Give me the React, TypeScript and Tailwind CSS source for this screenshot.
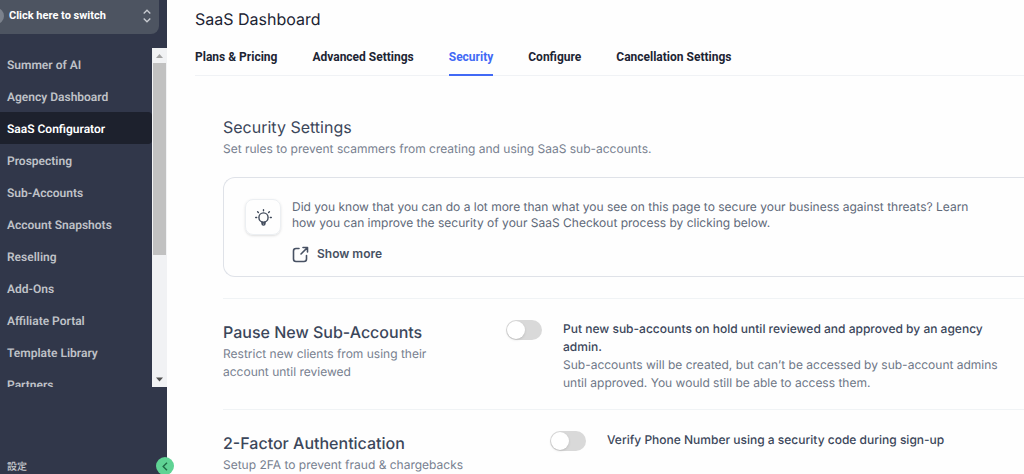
import { useState } from "react";
import { clsx } from "clsx";

const NAV_ITEMS = [
  "Summer of AI",
  "Agency Dashboard",
  "SaaS Configurator",
  "Prospecting",
  "Sub-Accounts",
  "Account Snapshots",
  "Reselling",
  "Add-Ons",
  "Affiliate Portal",
  "Template Library",
  "Partners",
];

const TABS = ["Plans & Pricing", "Advanced Settings", "Security", "Configure", "Cancellation Settings"];

function Sidebar() {
  const [active, setActive] = useState("SaaS Configurator");

  return (
    <aside className="relative flex w-[167px] shrink-0 flex-col bg-[#31374a] font-[Roboto,sans-serif]">
      <button className="mr-2 flex h-[34px] shrink-0 items-center rounded-br-lg bg-[#4d5461] pr-2 pb-0.5 text-left text-[11px] font-bold text-white">
        <span className="-ml-3 mr-[5px] h-4 w-4 shrink-0 rounded-full bg-[#7b818c]" />
        <span className="flex-1 whitespace-nowrap">Click here to switch</span>
        <svg width="8" height="14" viewBox="0 0 8 14" fill="none" stroke="#c9ccd2" strokeWidth="1.3">
          <path d="M0.7 4.5 4 1.2l3.3 3.3M0.7 9.5 4 12.8l3.3-3.3" />
        </svg>
      </button>

      <div className="mt-3.5 flex min-h-0 flex-1">
        <nav className="min-w-0 flex-1 overflow-hidden">
          {NAV_ITEMS.map((item) => (
            <a
              key={item}
              href="#"
              onClick={() => setActive(item)}
              className={clsx(
                "flex h-8 items-center whitespace-nowrap rounded-r pt-0.5 pl-[7px] text-xs font-semibold",
                item === active ? "bg-[#1d212d] text-white" : "text-[#bfc1c7]"
              )}
            >
              {item}
            </a>
          ))}
        </nav>
        <div className="flex w-[15px] flex-col items-center bg-[#f1f2f4]">
          <svg className="shrink-0" width="15" height="15" viewBox="0 0 15 15">
            <path d="M4 10 7.5 6l3.5 4z" fill="#a3a3a3" />
          </svg>
          <div className="h-48 w-[13px] shrink-0 bg-[#c1c1c1]" />
          <svg className="mt-auto shrink-0" width="15" height="15" viewBox="0 0 15 15">
            <path d="M4 5.500 7.500 9.500 11 5.500z" fill="#505050" />
          </svg>
        </div>
      </div>

      <div className="flex h-[87px] shrink-0 items-end pb-0.5">
        <a href="#" className="pl-[7px] font-['Noto_Sans_CJK_JP',sans-serif] text-[10px] leading-3 font-medium text-[#c6c8cd]">
          設定
        </a>
      </div>
      <button
        aria-label="Collapse sidebar"
        className="absolute -right-[7px] -bottom-px z-10 flex h-[18px] w-[18px] items-center justify-center rounded-full bg-[#5fd394]"
      >
        <svg width="6" height="9" viewBox="0 0 6 9" fill="none" stroke="#1f6b45" strokeWidth="1.4">
          <path d="M5 0.800 1.200 4.500 5 8.200" />
        </svg>
      </button>
    </aside>
  );
}

function BulbIcon() {
  return (
    <svg width="17" height="17" viewBox="0 0 17 17" fill="none" stroke="#3f495a" strokeWidth="1.400" strokeLinecap="round">
      <circle cx="8.500" cy="8.500" r="4.600" />
      <path d="M7 13v1.600a1.500 1.500 0 0 0 3 0V13M7 14h3" />
      <path d="M8.500 0.700v1M2.600 2.800l.8.800M14.400 2.800l-.8.800M0.700 8.500h1M15.300 8.500h1" />
    </svg>
  );
}

function ShareIcon() {
  return (
    <svg width="17" height="17" viewBox="0 0 17 17" fill="none" stroke="#475163" strokeWidth="1.600" strokeLinecap="round" strokeLinejoin="round">
      <path d="M11 1.500h4.500V6M15.500 1.500 9 8" />
      <path d="M7 2.500H4Q1.500 2.500 1.500 5v8q0 2.500 2.500 2.500h8q2.500 0 2.500-2.500V9.500" />
    </svg>
  );
}

function Toggle({ id }: { id: string }) {
  const [on, setOn] = useState(false);

  return (
    <input
      id={id}
      type="checkbox"
      role="switch"
      checked={on}
      onChange={(e) => setOn(e.target.checked)}
      className="h-5 w-9 shrink-0 cursor-pointer appearance-none rounded-full bg-[#d9d9d9] p-px before:block before:h-[18px] before:w-[18px] before:rounded-full before:bg-white before:shadow checked:bg-[#4169f5] checked:before:translate-x-4"
    />
  );
}

export default function App() {
  const [tab, setTab] = useState("Security");

  return (
    <div className="flex h-screen overflow-hidden bg-[#fefefe] font-[Inter,sans-serif] [text-rendering:geometricPrecision]">
      <Sidebar />

      <main className="min-w-0 flex-1 overflow-hidden pl-7">
        <h1 className="pt-2 text-base leading-[22px] font-normal text-[#1c2433]">SaaS Dashboard</h1>

        <div className="mt-2 flex gap-[35px] border-b border-[#f0f2f5] font-[Roboto,sans-serif]">
          {TABS.map((name) => (
            <button
              key={name}
              onClick={() => setTab(name)}
              className={clsx(
                "-mb-px h-[38px] whitespace-nowrap border-b-2 pt-0.5 text-xs font-bold",
                name === tab ? "border-[#4169f5] text-[#4169f5]" : "border-transparent text-[#1c2433]"
              )}
            >
              {name}
            </button>
          ))}
        </div>

        <div className="pl-7 text-xs text-[#5f6979]">
          <h2 className="mb-px pt-[39px] text-base leading-6 text-[#3b465a]">Security Settings</h2>
          <p className="leading-[18px] text-[#77808f]">
            Set rules to prevent scammers from creating and using SaaS sub-accounts.
          </p>

          <section className="mt-[19px] flex gap-[11px] rounded-l-xl border border-r-0 border-[#dfe2e8] pt-[21px] pr-9 pb-[13px] pl-[21px]">
            <div className="flex h-9 w-9 shrink-0 items-center justify-center rounded-lg border border-[#eceff2] shadow-sm">
              <BulbIcon />
            </div>
            <div>
              <p className="leading-4">
                Did you know that you can do a lot more than what you see on this page to secure your business against
                threats? Learn how you can improve the security of your SaaS Checkout process by clicking below.
              </p>
              <button className="mt-3.5 flex items-center gap-2 leading-[18px] font-semibold text-[#475163]">
                <ShareIcon />
                Show more
              </button>
            </div>
          </section>

          <section className="mt-[21px] flex items-start border-y border-[#f0f3f5] pt-[21px] pb-[17px]">
            <div className="w-[283px] shrink-0 pr-12">
              <h2 className="mb-px text-base leading-6 font-medium text-[#3b465a]">Pause New Sub-Accounts</h2>
              <p className="leading-[18px] text-[#77808f]">Restrict new clients from using their account until reviewed</p>
            </div>
            <Toggle id="pause" />
            <div className="ml-[21px] pr-4 leading-[18px]">
              <label htmlFor="pause" className="block font-medium text-[#3b465a]">
                Put new sub-accounts on hold until reviewed and approved by an agency admin.
              </label>
              <p className="text-[#6d7686]">
                Sub-accounts will be created, but can’t be accessed by sub-account admins until approved. You would still
                be able to access them.
              </p>
            </div>
          </section>

          <section className="flex items-start pt-[21px]">
            <div className="w-[327px] shrink-0 pr-12">
              <h2 className="mb-px text-base leading-6 font-medium text-[#3b465a]">2-Factor Authentication</h2>
              <p className="leading-[18px] text-[#77808f]">Setup 2FA to prevent fraud & chargebacks</p>
            </div>
            <Toggle id="two-factor" />
            <label htmlFor="two-factor" className="ml-[21px] leading-[18px] font-medium text-[#3b465a]">
              Verify Phone Number using a security code during sign-up
            </label>
          </section>
        </div>
      </main>
    </div>
  );
}
